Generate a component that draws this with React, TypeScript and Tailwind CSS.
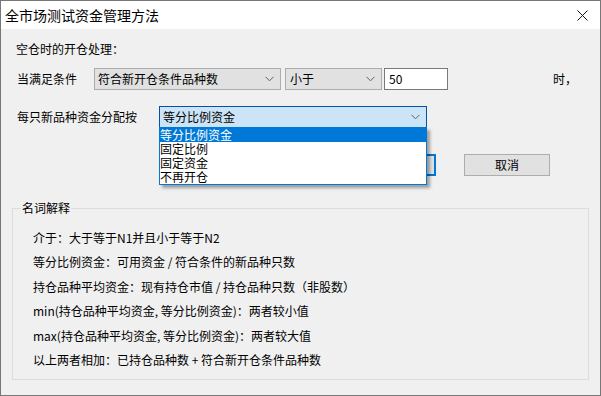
import React from "react";

const Chevron = () => (
  <svg width="9" height="6" viewBox="0 0 9 6" className="shrink-0">
    <path d="M0.5 0.8 L4.5 4.8 L8.5 0.8" fill="none" stroke="#606060" strokeWidth="1" />
  </svg>
);

const Combo = ({ text, className }: { text: string; className: string }) => (
  <div
    className={`h-[22px] flex items-center justify-between pl-[3px] pr-[6px] bg-[#e1e1e1] border border-[#adadad] ${className}`}
  >
    <span>{text}</span>
    <Chevron />
  </div>
);

const notes = [
  "介于：大于等于N1并且小于等于N2",
  "等分比例资金：可用资金 / 符合条件的新品种只数",
  "持仓品种平均资金：现有持仓市值 / 持仓品种只数（非股数）",
  "min(持仓品种平均资金, 等分比例资金)：两者较小值",
  "max(持仓品种平均资金, 等分比例资金)：两者较大值",
  "以上两者相加：已持仓品种数 + 符合新开仓条件品种数",
];

const App = () => {
  return (
    <div
      className="w-[601px] h-[396px] border border-[#777777] bg-[#f0f0f0] text-[12px] text-black flex flex-col"
      style={{ fontFamily: '"Noto Sans CJK SC", "Noto Sans", sans-serif' }}
    >
      {/* Title bar */}
      <div className="h-[28px] bg-white flex items-center justify-between pl-[4px] pr-[12px] shrink-0">
        <span className="text-[14px] leading-[18px]">全市场测试资金管理方法</span>
        <svg width="11" height="11" viewBox="0 0 11 11">
          <path d="M0.5 0.5 L10.5 10.5 M10.5 0.5 L0.5 10.5" stroke="#111" strokeWidth="1" />
        </svg>
      </div>

      <div className="relative flex-1 pl-[15px] pr-[11px]">
        <div className="mt-[12px] h-[16px] leading-[16px]">空仓时的开仓处理：</div>

        {/* Row: condition */}
        <div className="mt-[11px] h-[22px] flex items-center">
          <span className="w-[78px] pl-[1px]">当满足条件</span>
          <Combo text="符合新开仓条件品种数" className="w-[187px]" />
          <Combo text="小于" className="w-[97px] ml-[4px] pl-[4px]" />
          <div className="w-[64px] h-[22px] ml-[2px] bg-white border border-[#7a7a7a] flex items-center pl-[4px]">
            50
          </div>
          <span className="ml-[105px]">时，</span>
        </div>

        {/* Row: allocation */}
        <div className="mt-[16px] h-[22px] flex items-center">
          <span className="w-[143px] pl-[1px]">每只新品种资金分配按</span>
          <div className="w-[268px] h-[22px] flex items-center justify-between pl-[3px] pr-[6px] bg-[#cce4f7] border border-[#0054a6]">
            <span>等分比例资金</span>
            <Chevron />
          </div>
        </div>

        {/* Buttons */}
        <div className="mt-[26px] h-[22px] flex">
          <div className="ml-[334px] w-[86px] h-[22px] bg-[#e1e1e1] border-2 border-[#0078d7] flex items-center justify-center">
            确定
          </div>
          <div className="ml-[28px] w-[86px] h-[22px] bg-[#e1e1e1] border border-[#adadad] flex items-center justify-center">
            取消
          </div>
        </div>

        {/* Open dropdown list */}
        <div className="absolute left-[158px] top-[98px] w-[268px] bg-white border border-[#0078d7] shadow-[3px_3px_3px_rgba(0,0,0,0.35)] leading-[14px]">
          <div className="h-[14px] bg-[#0078d7] text-white">等分比例资金</div>
          <div className="h-[14px]">固定比例</div>
          <div className="h-[14px]">固定资金</div>
          <div className="h-[14px]">不再开仓</div>
        </div>

        {/* Group box */}
        <div className="relative mt-[32px] -ml-[4px] w-[577px] h-[172px] border border-[#dcdcdc]">
          <span className="absolute left-[8px] -top-[9px] px-[1px] bg-[#f0f0f0] leading-[16px]">名词解释</span>
          <div className="pt-[17px] pl-[20px] leading-[24.4px]">
            {notes.map((n) => (
              <div key={n}>{n}</div>
            ))}
          </div>
        </div>
      </div>
    </div>
  );
};

export default App;
